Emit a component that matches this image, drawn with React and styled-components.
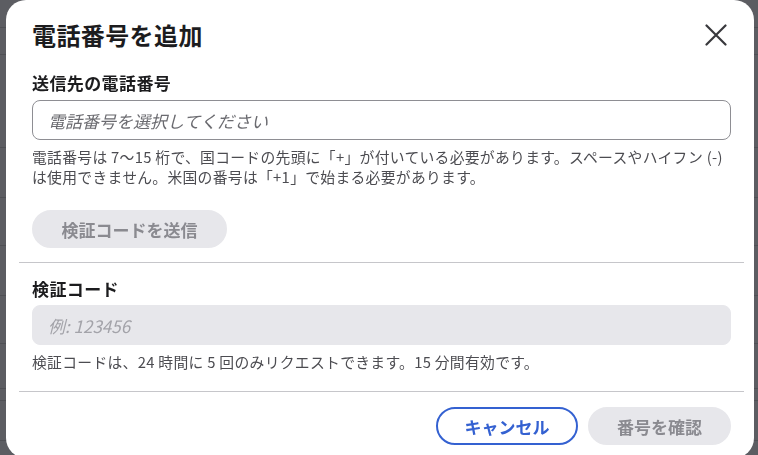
import React from "react";
import styled, { createGlobalStyle } from "styled-components";

const Global = createGlobalStyle`
  html, body { margin: 0; padding: 0; }
  body {
    background: #5c5d62;
    font-family: "Noto Sans CJK JP", "Noto Sans", sans-serif;
    overflow: hidden;
    text-spacing-trim: space-all;
  }
  * { box-sizing: border-box; }
`;

const Backdrop = styled.div`
  position: fixed;
  inset: 0;
  display: flex;
  flex-direction: column;
  background: #5c5d62;
`;

const BackRow = styled.div`
  height: ${(p) => p.h}px;
  border-bottom: 1px solid #4f5055;
  flex: none;
`;

const Stage = styled.div`
  position: relative;
  z-index: 1;
  padding: 0 4px 0 6px;
`;

const Modal = styled.div`
  width: 748px;
  height: 458px;
  background: #ffffff;
  border-radius: 20px;
  display: flex;
  flex-direction: column;
  color: #1c1c1e;
`;

const Header = styled.div`
  display: flex;
  align-items: center;
  justify-content: space-between;
  padding: 19px 27px 0 26px;
`;

const Title = styled.h1`
  margin: 0;
  font-size: 24px;
  line-height: 32px;
  font-weight: 700;
  letter-spacing: 0.4px;
`;

const CloseButton = styled.button`
  border: none;
  background: none;
  padding: 0;
  width: 22px;
  height: 22px;
  display: flex;
  align-items: center;
  justify-content: center;
  color: #38383c;
`;

const Section = styled.div`
  display: flex;
  flex-direction: column;
  padding: ${(p) => p.pt}px 23px ${(p) => p.pb}px 26px;
`;

const Label = styled.div`
  font-size: 17px;
  line-height: 24px;
  font-weight: 700;
  letter-spacing: 0.4px;
`;

const Input = styled.div`
  margin-top: ${(p) => p.mt}px;
  height: 40px;
  border-radius: 8px;
  border: 1px solid ${(p) => (p.disabled ? "#e7e7eb" : "#8e8e93")};
  background: ${(p) => (p.disabled ? "#e7e7eb" : "#ffffff")};
  display: flex;
  align-items: center;
  padding-left: 15px;
  font-size: 17px;
  font-style: italic;
  color: ${(p) => (p.disabled ? "#a3a3a9" : "#6b6b70")};
`;

const Help = styled.p`
  margin: 7px 0 0;
  font-size: 14.8px;
  line-height: 20px;
  letter-spacing: 0.3px;
  color: #4c4c51;
  white-space: nowrap;
`;

const PillButton = styled.button`
  height: 38px;
  border-radius: 19px;
  font-family: inherit;
  font-size: 17px;
  font-weight: 700;
  padding: 0;
  border: 2px solid ${(p) => (p.outline ? "#3461d1" : "#e7e7eb")};
  background: ${(p) => (p.outline ? "#ffffff" : "#e7e7eb")};
  color: ${(p) => (p.outline ? "#3461d1" : "#8a8a90")};
  width: ${(p) => p.w}px;
  display: flex;
  align-items: center;
  justify-content: center;
`;

const SendRow = styled.div`
  margin-top: 23px;
  display: flex;
`;

const Divider = styled.div`
  height: 1px;
  background: #c6c6ca;
  margin: 0 10px 0 13px;
`;

const Footer = styled.div`
  display: flex;
  justify-content: flex-end;
  gap: 10px;
  padding: 15px 23px 0 26px;
`;

const backRows = [28, 27, 93, 50, 48, 50, 48, 45, 12, 40];

export default function App() {
  return (
    <>
      <Global />
      <Backdrop>
        {backRows.map((h, i) => (
          <BackRow key={i} h={h} />
        ))}
      </Backdrop>
      <Stage>
        <Modal>
          <Header>
            <Title>電話番号を追加</Title>
            <CloseButton aria-label="閉じる">
              <svg width="22" height="22" viewBox="0 0 22 22">
                <path
                  d="M1.5 1.5 L20.5 20.5 M20.5 1.5 L1.5 20.5"
                  stroke="currentColor"
                  strokeWidth="2.2"
                  strokeLinecap="round"
                  fill="none"
                />
              </svg>
            </CloseButton>
          </Header>
          <Section pt={20} pb={14}>
            <Label>送信先の電話番号</Label>
            <Input mt={5}>電話番号を選択してください</Input>
            <Help>
              電話番号は 7〜15 桁で、国コードの先頭に「+」が付いている必要があります。スペースやハイフン (-)
              <br />
              は使用できません。米国の番号は「+1」で始まる必要があります。
            </Help>
            <SendRow>
              <PillButton w={195}>検証コードを送信</PillButton>
            </SendRow>
          </Section>
          <Divider />
          <Section pt={14} pb={19}>
            <Label>検証コード</Label>
            <Input mt={4} disabled>
              例: 123456
            </Input>
            <Help>検証コードは、24 時間に 5 回のみリクエストできます。15 分間有効です。</Help>
          </Section>
          <Divider />
          <Footer>
            <PillButton outline w={142}>
              キャンセル
            </PillButton>
            <PillButton w={143}>番号を確認</PillButton>
          </Footer>
        </Modal>
      </Stage>
    </>
  );
}
